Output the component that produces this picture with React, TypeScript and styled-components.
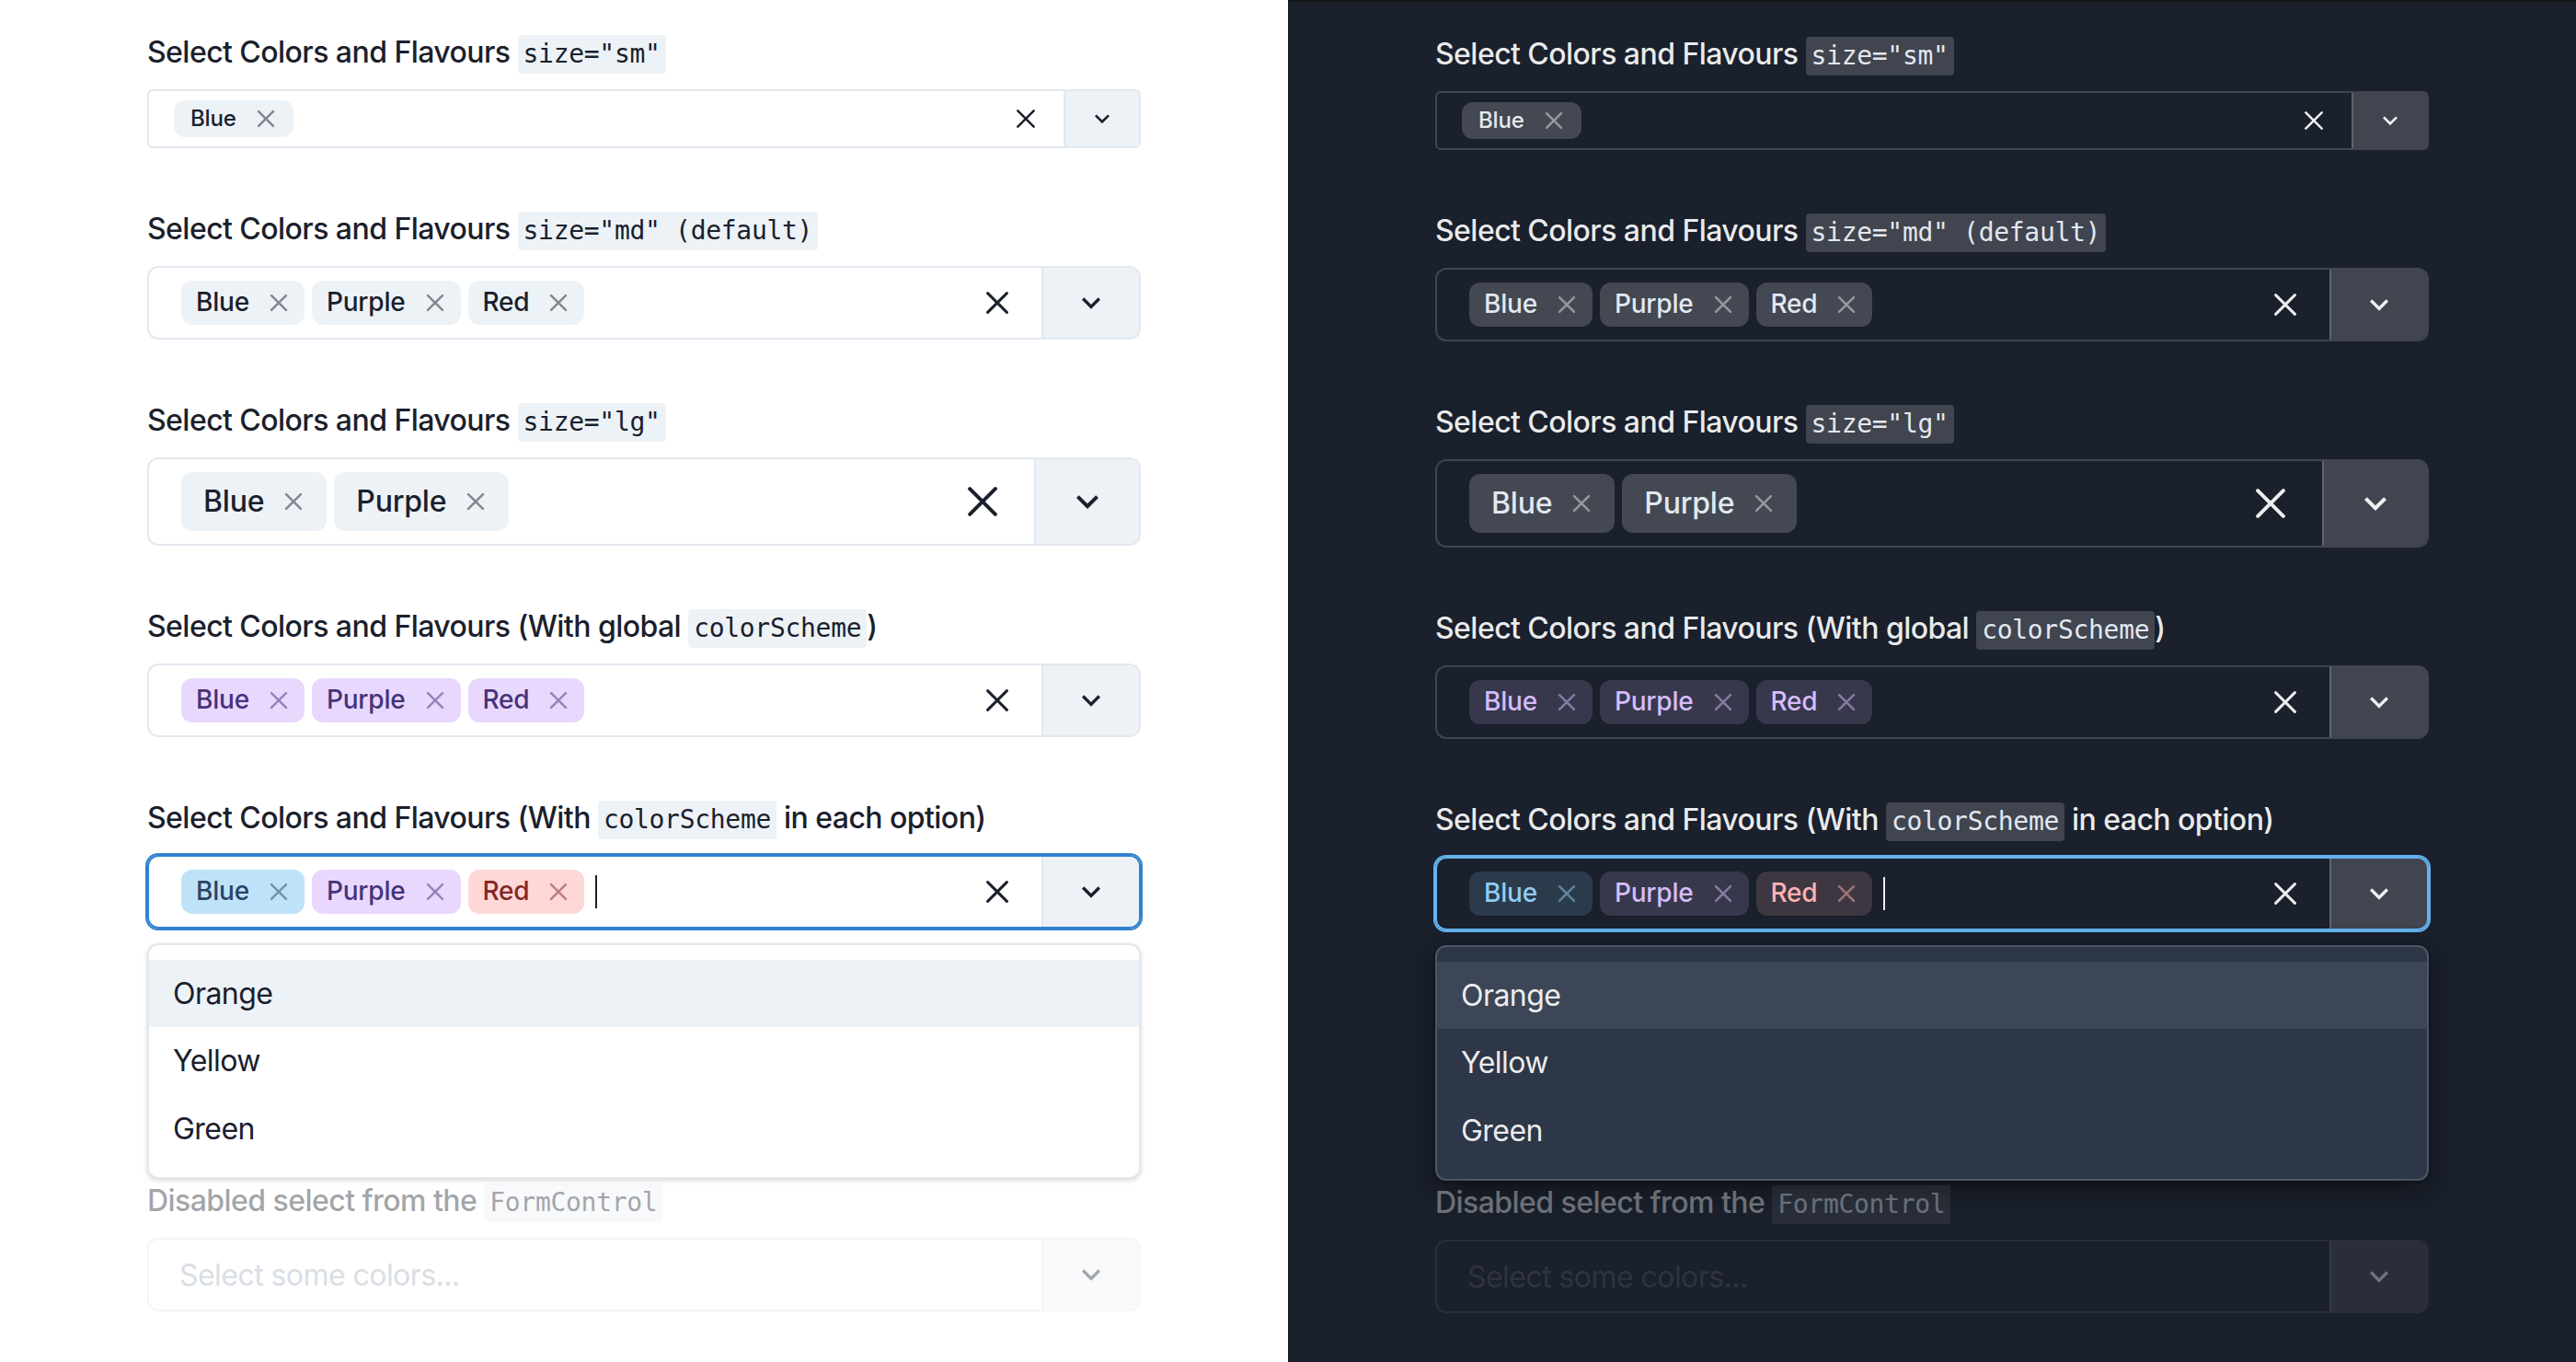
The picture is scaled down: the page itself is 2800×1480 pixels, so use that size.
import React from "react";
import styled, { createGlobalStyle } from "styled-components";

type Mode = "light" | "dark";
type Size = "sm" | "md" | "lg";
type Scheme = "gray" | "blue" | "purple" | "red";

const palette = {
  light: {
    bg: "#ffffff",
    text: "#1a202c",
    border: "#e2e8f0",
    indicatorBg: "#edf2f7",
    codeBg: "#edf2f7",
    codeText: "#1a202c",
    focus: "#3182ce",
    menuBg: "#ffffff",
    menuBorder: "#e2e8f0",
    menuShadow: "0 2px 6px rgba(0,0,0,0.10), 0 2px 4px rgba(0,0,0,0.06)",
    optionFocus: "#edf2f7",
    placeholder: "#a0aec0",
    icon: "#1a202c",
    topEdge: "none",
  },
  dark: {
    bg: "#1a202c",
    text: "rgba(255,255,255,0.92)",
    border: "rgba(255,255,255,0.17)",
    indicatorBg: "rgba(255,255,255,0.17)",
    codeBg: "rgba(255,255,255,0.17)",
    codeText: "#e2e8f0",
    focus: "#63b3ed",
    menuBg: "#2d3748",
    menuBorder: "rgba(255,255,255,0.16)",
    menuShadow: "0 0 0 2px rgba(0,0,0,0.12), 0 10px 30px rgba(0,0,0,0.45)",
    optionFocus: "rgba(255,255,255,0.08)",
    placeholder: "rgba(255,255,255,0.24)",
    icon: "rgba(255,255,255,0.92)",
    topEdge: "2px solid #141414",
  },
};

const tagColors: Record<Mode, Record<Scheme, { bg: string; fg: string }>> = {
  light: {
    gray: { bg: "#edf2f7", fg: "#1a202c" },
    blue: { bg: "#bee3f8", fg: "#2a4365" },
    purple: { bg: "#e9d8fd", fg: "#44337a" },
    red: { bg: "#fed7d7", fg: "#822727" },
  },
  dark: {
    gray: { bg: "rgba(255,255,255,0.18)", fg: "#e2e8f0" },
    blue: { bg: "rgba(144,205,244,0.16)", fg: "#90cdf4" },
    purple: { bg: "rgba(214,188,250,0.16)", fg: "#d6bcfa" },
    red: { bg: "rgba(254,178,178,0.16)", fg: "#feb2b2" },
  },
};

const sizes = {
  sm: { h: 64, radius: 6, padX: 23, tagH: 40, tagFont: 24, tagPadX: 18, clear: 20, clearGap: 31, chevron: 32, indPadX: 24 },
  md: { h: 80, radius: 12, padX: 31, tagH: 48, tagFont: 28, tagPadX: 16, clear: 24, clearGap: 36, chevron: 40, indPadX: 32 },
  lg: { h: 96, radius: 12, padX: 31, tagH: 64, tagFont: 32, tagPadX: 24, clear: 32, clearGap: 40, chevron: 48, indPadX: 32 },
};

const GlobalStyle = createGlobalStyle`
  html, body { margin: 0; padding: 0; }
  body { font-family: Inter, "Noto Sans", sans-serif; }
`;

const Page = styled.div`
  display: grid;
  grid-template-columns: 1400px 1400px;
  min-height: 1480px;
`;

const Panel = styled.div<{ $mode: Mode }>`
  box-sizing: border-box;
  background: ${(p) => palette[p.$mode].bg};
  border-top: ${(p) => palette[p.$mode].topEdge};
  padding: 33px 160px 0;
  color: ${(p) => palette[p.$mode].text};
`;

const Field = styled.div<{ $gap: number }>`
  margin-top: ${(p) => p.$gap}px;
`;

const Label = styled.div<{ $mode: Mode; $disabled?: boolean }>`
  display: block;
  font-family: Inter, "Noto Sans", sans-serif;
  font-weight: 500;
  font-size: 32px;
  line-height: 48px;
  letter-spacing: -0.55px;
  margin-bottom: 16px;
  color: ${(p) => palette[p.$mode].text};
  opacity: ${(p) => (p.$disabled ? 0.4 : 1)};
  white-space: nowrap;
`;

const Code = styled.code<{ $mode: Mode }>`
  display: inline-block;
  font-family: "DejaVu Sans Mono", "Liberation Mono", monospace;
  font-size: 28px;
  line-height: 42px;
  font-weight: 400;
  letter-spacing: -0.3px;
  padding: 0 6px;
  border-radius: 4px;
  background: ${(p) => palette[p.$mode].codeBg};
  color: ${(p) => palette[p.$mode].codeText};
`;

const Control = styled.div<{ $mode: Mode; $size: Size; $focused?: boolean; $disabled?: boolean }>`
  box-sizing: border-box;
  display: flex;
  align-items: center;
  height: ${(p) => sizes[p.$size].h}px;
  border: 2px solid ${(p) => (p.$focused ? palette[p.$mode].focus : palette[p.$mode].border)};
  border-radius: ${(p) => sizes[p.$size].radius}px;
  box-shadow: ${(p) => (p.$focused ? `0 0 0 2px ${palette[p.$mode].focus}` : "none")};
  overflow: hidden;
  opacity: ${(p) => (p.$disabled ? 0.4 : 1)};
`;

const ValueContainer = styled.div<{ $size: Size }>`
  flex: 1;
  display: flex;
  align-items: center;
  padding-left: ${(p) => sizes[p.$size].padX}px;
  min-width: 0;
`;

const Tag = styled.span<{ $mode: Mode; $size: Size; $scheme: Scheme }>`
  display: inline-flex;
  align-items: center;
  box-sizing: border-box;
  height: ${(p) => sizes[p.$size].tagH}px;
  padding: 0 ${(p) => sizes[p.$size].tagPadX}px;
  margin: 0 4px;
  border-radius: 12px;
  background: ${(p) => tagColors[p.$mode][p.$scheme].bg};
  color: ${(p) => tagColors[p.$mode][p.$scheme].fg};
  font-family: Inter, "Noto Sans", sans-serif;
  font-weight: 500;
  font-size: ${(p) => sizes[p.$size].tagFont}px;
  letter-spacing: -0.2px;
  line-height: 1.2;
`;

const TagClose = styled.span`
  display: inline-flex;
  align-items: center;
  justify-content: center;
  width: 40px;
  height: 40px;
  margin-left: 12px;
  margin-right: -8px;
  opacity: 0.5;
`;

const Caret = styled.span<{ $mode: Mode }>`
  display: inline-block;
  width: 2px;
  height: 36px;
  margin-left: 8px;
  background: ${(p) => palette[p.$mode].icon};
`;

const Placeholder = styled.span<{ $mode: Mode }>`
  margin-left: 2px;
  font-family: Inter, "Noto Sans", sans-serif;
  font-size: 32px;
  letter-spacing: -0.55px;
  color: ${(p) => palette[p.$mode].placeholder};
`;

const ClearIndicator = styled.div<{ $mode: Mode; $size: Size }>`
  display: flex;
  align-items: center;
  margin-right: ${(p) => sizes[p.$size].clearGap}px;
  color: ${(p) => palette[p.$mode].icon};
`;

const DropdownIndicator = styled.div<{ $mode: Mode; $size: Size }>`
  align-self: stretch;
  display: flex;
  align-items: center;
  padding: 0 ${(p) => sizes[p.$size].indPadX}px;
  border-left: 2px solid ${(p) => palette[p.$mode].border};
  background: ${(p) => palette[p.$mode].indicatorBg};
  color: ${(p) => palette[p.$mode].icon};
`;

const Menu = styled.div<{ $mode: Mode }>`
  margin-top: 16px;
  padding: 16px 0;
  border: 2px solid ${(p) => palette[p.$mode].menuBorder};
  border-radius: 12px;
  background: ${(p) => palette[p.$mode].menuBg};
  box-shadow: ${(p) => palette[p.$mode].menuShadow};
`;

const Option = styled.div<{ $mode: Mode; $focused?: boolean }>`
  padding: 16px 28px 16px 26px;
  font-family: Inter, "Noto Sans", sans-serif;
  font-size: 32px;
  line-height: 41.4px;
  letter-spacing: -0.55px;
  color: ${(p) => palette[p.$mode].text};
  background: ${(p) => (p.$focused ? palette[p.$mode].optionFocus : "transparent")};
`;

const XIcon = ({ size }: { size: number }) => (
  <svg width={size} height={size} viewBox="0 0 24 24" fill="none">
    <path d="M1.6 1.6L22.4 22.4M22.4 1.6L1.6 22.4" stroke="currentColor" strokeWidth="3" strokeLinecap="round" />
  </svg>
);

const TagXIcon = () => (
  <svg width={36} height={36} viewBox="0 0 24 24" fill="none">
    <path d="M6.7 6.7L17.3 17.3M17.3 6.7L6.7 17.3" stroke="currentColor" strokeWidth="1.7" strokeLinecap="round" />
  </svg>
);

const ChevronIcon = ({ size }: { size: number }) => (
  <svg width={size} height={size} viewBox="0 0 24 24">
    <path fill="currentColor" d="M16.59 8.59L12 13.17 7.41 8.59 6 10l6 6 6-6z" />
  </svg>
);

type TagItem = { label: string; scheme: Scheme };

const Select = ({
  mode,
  size,
  tags,
  focused,
  disabled,
  placeholder,
}: {
  mode: Mode;
  size: Size;
  tags: TagItem[];
  focused?: boolean;
  disabled?: boolean;
  placeholder?: string;
}) => (
  <Control $mode={mode} $size={size} $focused={focused} $disabled={disabled}>
    <ValueContainer $size={size}>
      {tags.map((t) => (
        <Tag key={t.label} $mode={mode} $size={size} $scheme={t.scheme}>
          {t.label}
          <TagClose>
            <TagXIcon />
          </TagClose>
        </Tag>
      ))}
      {focused && <Caret $mode={mode} />}
      {placeholder && <Placeholder $mode={mode}>{placeholder}</Placeholder>}
    </ValueContainer>
    {tags.length > 0 && (
      <ClearIndicator $mode={mode} $size={size}>
        <XIcon size={sizes[size].clear} />
      </ClearIndicator>
    )}
    <DropdownIndicator $mode={mode} $size={size}>
      <ChevronIcon size={sizes[size].chevron} />
    </DropdownIndicator>
  </Control>
);

const gray = (l: string): TagItem => ({ label: l, scheme: "gray" });
const purple = (l: string): TagItem => ({ label: l, scheme: "purple" });

const Demo = ({ mode }: { mode: Mode }) => (
  <Panel $mode={mode}>
    <Field $gap={0}>
      <Label $mode={mode}>
        Select Colors and Flavours <Code $mode={mode}>size="sm"</Code>
      </Label>
      <Select mode={mode} size="sm" tags={[gray("Blue")]} />
    </Field>
    <Field $gap={64}>
      <Label $mode={mode}>
        Select Colors and Flavours <Code $mode={mode}>size="md" (default)</Code>
      </Label>
      <Select mode={mode} size="md" tags={[gray("Blue"), gray("Purple"), gray("Red")]} />
    </Field>
    <Field $gap={64}>
      <Label $mode={mode}>
        Select Colors and Flavours <Code $mode={mode}>size="lg"</Code>
      </Label>
      <Select mode={mode} size="lg" tags={[gray("Blue"), gray("Purple")]} />
    </Field>
    <Field $gap={64}>
      <Label $mode={mode}>
        Select Colors and Flavours (With global <Code $mode={mode}>colorScheme</Code>)
      </Label>
      <Select mode={mode} size="md" tags={[purple("Blue"), purple("Purple"), purple("Red")]} />
    </Field>
    <Field $gap={64}>
      <Label $mode={mode}>
        Select Colors and Flavours (With <Code $mode={mode}>colorScheme</Code> in each option)
      </Label>
      <Select
        mode={mode}
        size="md"
        focused
        tags={[
          { label: "Blue", scheme: "blue" },
          { label: "Purple", scheme: "purple" },
          { label: "Red", scheme: "red" },
        ]}
      />
      <Menu $mode={mode}>
        <Option $mode={mode} $focused>
          Orange
        </Option>
        <Option $mode={mode}>Yellow</Option>
        <Option $mode={mode}>Green</Option>
      </Menu>
    </Field>
    <Field $gap={0}>
      <Label $mode={mode} $disabled>
        Disabled select from the <Code $mode={mode}>FormControl</Code>
      </Label>
      <Select mode={mode} size="md" tags={[]} disabled placeholder="Select some colors..." />
    </Field>
  </Panel>
);

export default function App() {
  return (
    <>
      <GlobalStyle />
      <Page>
        <Demo mode="light" />
        <Demo mode="dark" />
      </Page>
    </>
  );
}
